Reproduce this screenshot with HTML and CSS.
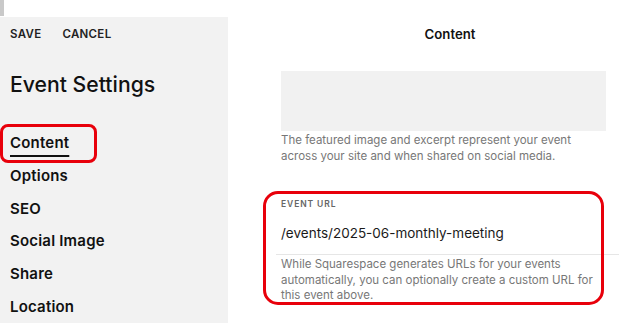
FILE: index.html
```html
<!DOCTYPE html>
<html lang="en">
<head>
    <meta charset="UTF-8">
    <meta name="viewport" content="width=device-width, initial-scale=1.0">
    <title>Event Settings</title>
    <link rel="stylesheet" href="styles.css">
</head>
<body>

    <div class="topbar"><span class="topbar-tab"></span></div>

    <div class="panel">
        <aside class="sidebar">
            <div class="actions">
                <span>SAVE</span>
                <span>CANCEL</span>
            </div>
            <h1>Event Settings</h1>
            <nav class="nav">
                <a class="nav-item active marked">Content</a>
                <a class="nav-item">Options</a>
                <a class="nav-item">SEO</a>
                <a class="nav-item">Social Image</a>
                <a class="nav-item">Share</a>
                <a class="nav-item">Location</a>
            </nav>
        </aside>

        <main class="main">
            <h2>Content</h2>
            <div class="image-box"></div>
            <p class="help">The featured image and excerpt represent your event across your site and when shared on social media.</p>

            <div class="field marked-field">
                <div class="field-label">EVENT URL</div>
                <div class="field-value">/events/2025-06-monthly-meeting</div>
                <p class="help">While Squarespace generates URLs for your events automatically, you can optionally create a custom URL for this event above.</p>
            </div>
        </main>
    </div>

</body>
</html>
```

FILE: styles.css
```css
/* Event settings panel */
body {
    margin: 0;
    width: 634px;
    height: 327px;
    overflow: hidden;
    background: #fff;
    font-family: Inter, "Noto Sans", sans-serif;
    color: #1a1a1a;
}
.topbar {
    height: 17px;
}
.topbar-tab {
    display: block;
    width: 4px;
    height: 16px;
    background: #c9c9c9;
}
.panel {
    display: flex;
}
.sidebar {
    width: 228px;
    height: 306px;
    background: #f2f2f2;
    padding-left: 10px;
    box-sizing: border-box;
}
.actions {
    display: flex;
    gap: 21px;
    margin-top: 10px;
    font-size: 11.5px;
    font-weight: 600;
    letter-spacing: 0.3px;
    color: #222;
}
h1 {
    margin: 30px 0 0;
    font-size: 21.2px;
    font-weight: 500;
    color: #111;
}
.nav {
    display: flex;
    flex-direction: column;
    margin-top: 36px;
}
.nav-item {
    position: relative;
    height: 32.8px;
    font-size: 15px;
    font-weight: 600;
    letter-spacing: 0.2px;
    color: #111;
}
.nav-item.active {
    text-decoration: underline;
    text-decoration-thickness: 2px;
    text-underline-offset: 7px;
}
.marked::after {
    content: "";
    position: absolute;
    left: -10px;
    top: -9px;
    width: 97px;
    height: 39px;
    border: 3px solid #e8000b;
    border-radius: 8px;
    box-sizing: border-box;
}
.main {
    flex: 1;
    padding: 0 15px 0 53px;
}
h2 {
    margin: 9px 0 0;
    text-align: center;
    font-size: 13.2px;
    font-weight: 600;
    color: #111;
}
.image-box {
    margin-top: 29px;
    width: 325px;
    height: 60px;
    background: #f1f1f1;
}
.help {
    margin: 2px 0 0;
    width: 325px;
    font-size: 11.5px;
    line-height: 15.5px;
    color: #777;
}
.field {
    position: relative;
    margin-top: 35px;
}
.field-label {
    font-size: 8.5px;
    font-weight: 600;
    letter-spacing: 0.9px;
    color: #666;
}
.field-value {
    margin-top: 16px;
    padding-bottom: 13px;
    margin-left: -5px;
    padding-left: 5px;
    border-bottom: 1px solid #e6e6e6;
    font-size: 13.5px;
    color: #1a1a1a;
}
.field .help {
    margin-top: 2px;
}
.marked-field::after {
    content: "";
    position: absolute;
    left: -18px;
    top: -8px;
    width: 341px;
    height: 114px;
    border: 3px solid #e8000b;
    border-radius: 15px;
    box-sizing: border-box;
}
```
